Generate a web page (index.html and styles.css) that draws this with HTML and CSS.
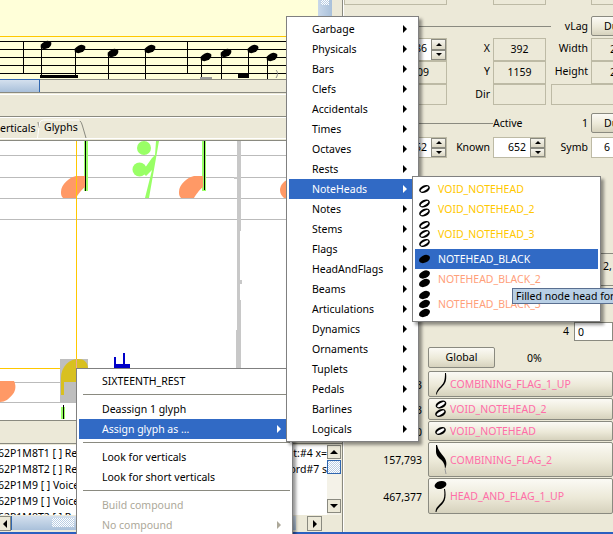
FILE: index.html
```html
<!DOCTYPE html>
<html>
<head>
<meta http-equiv="Content-Type" content="text/html; charset=utf-8"/>
<title>Glyph board</title>
<link rel="stylesheet" href="styles.css">
</head>

<body>

<svg class="sprite">
  <defs>
    <g id="black"><ellipse rx="5.7" ry="3.7" transform="rotate(-25)"/></g>
    <g id="void"><ellipse rx="5.6" ry="3.6" transform="rotate(-25)"/><ellipse rx="4.4" ry="1.5" transform="rotate(-32)" fill="#fff"/></g>
  </defs>
</svg>

<div class="app">

  <div class="left">
    <div class="score-row">
      <svg class="score" width="318" height="79">
        <rect x="0" y="36" width="318" height="1" fill="#ffc800"/>
        <g fill="#000">
          <rect x="0" y="41" width="318" height="1"/>
          <rect x="0" y="49" width="318" height="1"/>
          <rect x="0" y="57" width="318" height="1"/>
          <rect x="0" y="65" width="318" height="1"/>
          <rect x="0" y="73" width="318" height="1"/>
          <rect x="23" y="41" width="1" height="33"/>
          <rect x="187" y="41" width="1" height="33"/>
          <rect x="41" y="47" width="1" height="30"/>
          <rect x="75" y="51" width="1" height="26"/>
          <rect x="108" y="55" width="1" height="24"/>
          <rect x="145" y="51" width="1" height="28"/>
          <rect x="201" y="59" width="1" height="18"/>
          <rect x="221" y="55" width="1" height="24"/>
          <rect x="248" y="51" width="1" height="24"/>
          <rect x="267" y="59" width="1" height="20"/>
          <rect x="40" y="75" width="38" height="3"/>
          <rect x="238" y="74" width="11" height="4"/>
          <use href="#black" x="46" y="45"/>
          <use href="#black" x="80" y="49"/>
          <use href="#black" x="113" y="53"/>
          <use href="#black" x="150" y="49"/>
          <use href="#black" x="206" y="57"/>
          <use href="#black" x="226" y="53"/>
          <use href="#black" x="253" y="49"/>
          <use href="#black" x="272" y="57"/>
        </g>
        <rect x="200" y="77" width="12" height="2" fill="#999"/>
        <path d="M276 70 C278 72 278 75 276 78" fill="none" stroke="#888"/>
      </svg>
      <div class="vscroll"><div class="vthumb"><div class="thumb-grip"></div></div></div>
    </div>

    <div class="hscroll"><div class="hthumb"></div></div>
    <div class="strip"></div>

    <div class="tabs">
      <span class="tab tab-cut">erticals</span>
      <span class="tab tab-on">
        Glyphs
        <svg class="tab-edge" width="50" height="21">
          <path d="M1 4 L2 10" stroke="#8a8a80" fill="none"/>
          <path d="M0.500 20 L2.500 5 Q3.500 2 6.500 2 L42 2" stroke="#fff" fill="none"/>
          <path d="M43 3 Q44.500 4 45.500 8 L49 20" stroke="#8a8a80" fill="none"/>
        </svg>
      </span>
    </div>

    <svg class="glyphs" width="342" height="279" viewBox="0 141 342 279">
      <!-- staff lines -->
      <g fill="#bbb">
        <rect x="0" y="155" width="342" height="1"/>
        <rect x="0" y="177" width="342" height="1"/>
        <rect x="0" y="198" width="342" height="1"/>
        <rect x="0" y="219" width="342" height="1"/>
        <rect x="0" y="382" width="342" height="1"/>
        <rect x="0" y="402" width="342" height="1"/>
      </g>
      <!-- bar line -->
      <g fill="#c8c8c8">
        <rect x="237" y="141" width="3" height="279"/>
        <rect x="240" y="141" width="1" height="90"/>
        <rect x="234" y="177" width="7" height="2"/>
        <rect x="240" y="280" width="2" height="4"/>
        <rect x="240" y="300" width="1" height="80"/>
        <rect x="236" y="330" width="1" height="60"/>
      </g>
      <!-- rest -->
      <g fill="#99ff66">
        <circle cx="144" cy="148" r="7"/>
        <circle cx="139.500" cy="169.500" r="7"/>
        <path d="M156 141 L159 141 L149 198 L145 198 L152 170 L146 176 L142 172 L152 158 L155 155Z"/>
        <rect x="84" y="141" width="4" height="50"/>
        <rect x="202" y="141" width="4" height="50"/>
      </g>
      <!-- note heads -->
      <g fill="#ff9966">
        <path d="M61 192 C61 184 70 177 76 176 L85 176 L85 187 C80 191 78 195 76 198 L63 198 C61 196 61 194 61 192Z"/>
        <path d="M179 192 C179 184 188 177 194 176 L203 176 L203 187 C198 191 196 195 194 198 L181 198 C179 196 179 194 179 192Z"/>
        <path d="M287 180 C283 182 280 186 280 190 C280 194 282 196 284 198 L287 198Z"/>
        <path d="M0 381 L14 381 C16 385 16 390 13 394 C9 399 5 402 0 402Z"/>
      </g>
      <rect x="76" y="141" width="1" height="227" fill="#ffc800"/>
      <rect x="0" y="368" width="77" height="1" fill="#ffc800"/>
      <rect x="85" y="141" width="1" height="50"/>
      <rect x="204" y="141" width="1" height="49"/>
      <!-- selected glyph -->
      <rect x="60" y="359" width="28" height="43" fill="#bebebe"/>
      <path d="M61 395 L61 378 C61 366 70 359 78 359 C84 359 88 362 88 369 L77 369 L77 382 L64 382 L64 395Z" fill="#d8c020"/>
      <rect x="76" y="359" width="1" height="9" fill="#e8a8a0"/>
      <rect x="61" y="407" width="4" height="12" fill="#99ff66"/>
      <rect x="63" y="405" width="1" height="14"/>
      <path d="M114 357 h2 v7 h7 v-11 h2 v11 h5 v4 h-16Z" fill="#0000c8"/>
    </svg>

    <div class="strip strip-low"></div>

    <div class="log-row">
      <ul class="log">
        <li><span>62P1M8T1 [ ] Read</span><span>t:#4 x=</span></li>
        <li><span>62P1M8T2 [ ] Read</span><span>ord#7 s</span></li>
        <li><span>62P1M9 [ ] Voice</span></li>
        <li><span>62P1M9 [ ] Voice</span></li>
        <li><span>62P1M8T2 [ ] R</span></li>
      </ul>
      <div class="log-scroll">
        <div class="sbtn"><i class="up"></i></div>
        <div class="vgrip"></div>
        <div class="sbtn"><i class="down"></i></div>
      </div>
    </div>

    <div class="log-hbar">
      <div class="sbtn sbtn-l"><i class="lft"></i></div>
      <div class="hgrip"><div class="hgrip-dots"></div></div>
      <div class="sbtn sbtn-r"><i class="rgt"></i></div>
    </div>
  </div>

  <div class="panel">
    <div class="fields fields-top">
      <div class="field"></div><span></span><div class="field"></div><span></span><div class="field"></div>
    </div>

    <div class="rule-row">
      <div class="rule rule-a"></div>
      <label class="grow">vLag</label>
      <div class="btn btn-dump">Du</div>
    </div>

    <div class="fields">
      <div class="spin-box"><div class="input">86</div><div class="spin"><b><i class="up"></i></b><b><i class="down"></i></b></div></div>
      <label>X</label><div class="field">392</div>
      <label>Width</label><div class="field field-cut">2</div>
    </div>
    <div class="fields">
      <div class="field field-r">09</div>
      <label>Y</label><div class="field">1159</div>
      <label>Height</label><div class="field field-cut">2</div>
    </div>
    <div class="fields fields-dir">
      <div class="field"></div>
      <label>Dir</label><div class="field"></div>
      <div class="field field-wide"></div>
    </div>

    <div class="rule-row rule-row-active">
      <div class="rule rule-b"></div>
      <span>Active</span>
      <label class="grow">1</label>
      <div class="btn btn-dump">Du</div>
    </div>

    <div class="fields">
      <div class="spin-box"><div class="input">652</div><div class="spin"><b><i class="up"></i></b><b><i class="down"></i></b></div></div>
      <label>Known</label>
      <div class="spin-box"><div class="input">652</div><div class="spin"><b><i class="up"></i></b><b><i class="down"></i></b></div></div>
      <label>Symb</label><div class="input input-symb">6</div>
    </div>

    <div class="tail">
      <div class="tail-cell">2,</div>
      <div class="tail-cell"></div>
    </div>

    <div class="seed-row">
      <label>4</label>
      <div class="input input-seed">0</div>
    </div>

    <div class="global-row">
      <div class="btn btn-global">Global</div>
      <span>0%</span>
    </div>

    <div class="votes">
      <span>3</span>
      <div class="btn vote vote-1">
        <svg width="14" height="24" viewBox="0 0 14 24"><path d="M2 23 C2 19 4 17 7 14 C10 11 11 8 11 1 L12 1 C13 9 11 12 8 15 C5 18 3 20 3 22Z"/></svg>
        COMBINING_FLAG_1_UP
      </div>
      <span>3</span>
      <div class="btn vote vote-2">
        <svg width="14" height="20" viewBox="0 0 14 20"><use href="#void" x="7" y="5.500"/><use href="#void" x="6.500" y="14"/></svg>
        VOID_NOTEHEAD_2
      </div>
      <span>0</span>
      <div class="btn vote vote-3">
        <svg width="14" height="12" viewBox="0 0 14 12"><use href="#void" x="6.500" y="6"/></svg>
        VOID_NOTEHEAD
      </div>
      <span>157,793</span>
      <div class="btn vote vote-4">
        <svg width="14" height="32" viewBox="0 0 14 32"><path d="M2 1 L3 1 C4 6 7 9 10 13 C13 17 13 21 11 25 C11 20 9 17 6 15 C4 13 2 11 2 8Z"/><path d="M11 25 L12 30" stroke="#999" fill="none"/></svg>
        COMBINING_FLAG_2
      </div>
      <span>467,377</span>
      <div class="btn vote vote-5">
        <svg width="14" height="33" viewBox="0 0 14 33"><ellipse cx="6.500" cy="5" rx="6" ry="3.800" transform="rotate(-15 6.500 5)"/><path d="M1.500 32 C1.500 28 4 26 7 23 C10 20 11 16 10 9 L11 9 C12.500 17 11 21 8 24.500 C5 27.500 3 29 2.500 32Z"/></svg>
        HEAD_AND_FLAG_1_UP
      </div>
    </div>
  </div>
</div>
<div class="app-edge"></div>

<!-- popup menus -->
<div class="menu menu-context">
  <div class="item">SIXTEENTH_REST</div>
  <div class="sep"></div>
  <div class="item">Deassign 1 glyph</div>
  <div class="item on">Assign glyph as &hellip;<i class="arrow"></i></div>
  <div class="sep"></div>
  <div class="item">Look for verticals</div>
  <div class="item">Look for short verticals</div>
  <div class="sep"></div>
  <div class="item off">Build compound</div>
  <div class="item off">No compound<i class="arrow"></i></div>
</div>

<div class="menu menu-main">
  <div class="item">Garbage<i class="arrow"></i></div>
  <div class="item">Physicals<i class="arrow"></i></div>
  <div class="item">Bars<i class="arrow"></i></div>
  <div class="item">Clefs<i class="arrow"></i></div>
  <div class="item">Accidentals<i class="arrow"></i></div>
  <div class="item">Times<i class="arrow"></i></div>
  <div class="item">Octaves<i class="arrow"></i></div>
  <div class="item">Rests<i class="arrow"></i></div>
  <div class="item on">NoteHeads<i class="arrow"></i></div>
  <div class="item">Notes<i class="arrow"></i></div>
  <div class="item">Stems<i class="arrow"></i></div>
  <div class="item">Flags<i class="arrow"></i></div>
  <div class="item">HeadAndFlags<i class="arrow"></i></div>
  <div class="item">Beams<i class="arrow"></i></div>
  <div class="item">Articulations<i class="arrow"></i></div>
  <div class="item">Dynamics<i class="arrow"></i></div>
  <div class="item">Ornaments<i class="arrow"></i></div>
  <div class="item">Tuplets<i class="arrow"></i></div>
  <div class="item">Pedals<i class="arrow"></i></div>
  <div class="item">Barlines<i class="arrow"></i></div>
  <div class="item">Logicals<i class="arrow"></i></div>
</div>

<div class="menu menu-sub">
  <div class="shape yellow"><svg width="12" height="20"><use href="#void" x="5.500" y="10"/></svg>VOID_NOTEHEAD</div>
  <div class="shape yellow"><svg width="12" height="20"><use href="#void" x="5.500" y="4.500"/><use href="#void" x="5.500" y="13.500"/></svg>VOID_NOTEHEAD_2</div>
  <div class="shape shape-3 yellow"><svg width="12" height="30"><use href="#void" x="5.500" y="6"/><use href="#void" x="5.500" y="15"/><use href="#void" x="5.500" y="24"/></svg>VOID_NOTEHEAD_3</div>
  <div class="shape on"><svg width="12" height="20"><use href="#black" x="5.500" y="10"/></svg>NOTEHEAD_BLACK</div>
  <div class="shape salmon"><svg width="12" height="20"><use href="#black" x="5.500" y="5.500"/><use href="#black" x="5.500" y="14"/></svg>NOTEHEAD_BLACK_2</div>
  <div class="shape shape-3 salmon"><svg width="12" height="30"><use href="#black" x="5.500" y="6"/><use href="#black" x="5.500" y="15"/><use href="#black" x="5.500" y="24"/></svg>NOTEHEAD_BLACK_3</div>
</div>

<div class="tip">Filled node head for</div>

</body>
</html>
```

FILE: styles.css
```css
html, body {
  margin: 0;
  height: 534px;
  overflow: hidden;
}

body {
  position: relative;
  background-color: #ece9d8;
  font-family: "Noto Sans", sans-serif;
  font-size: 10.5px;
  color: #000;
}

.sprite {
  display: block;
  width: 0;
  height: 0;
}

.app {
  display: flex;
  height: 532px;
  overflow: hidden;
}

.app-edge {
  height: 2px;
  background-color: #2a5fc0;
}

/* left side */
.left {
  width: 342px;
  flex: none;
  border-right: 1px solid #8a8a80;
  box-shadow: 1px 0 0 #fff;
}

.score-row {
  display: flex;
  height: 79px;
}

.score {
  display: block;
  background-color: #ffffd9;
  flex: none;
}

.vscroll {
  width: 14px;
  flex: none;
}

.vthumb {
  height: 79px;
  background: linear-gradient(90deg, #c9d8ea, #a9c0da);
}

.thumb-grip {
  width: 8px;
  height: 5px;
  margin: 0 auto;
  background: repeating-conic-gradient(#fff 0 25%, #b9cde4 0 50%) 0 0 / 2px 2px;
}

.hscroll {
  height: 14px;
  box-sizing: border-box;
  border-top: 1px solid #8a8a80;
  border-bottom: 1px solid #8a8a80;
}

.hthumb {
  width: 39px;
  height: 12px;
  border-right: 1px solid #2f66b0;
  border-top: 1px solid #2f66b0;
  margin-top: -1px;
  background: linear-gradient(#d4e0ee, #a9c0da);
}

.strip {
  height: 21px;
  margin-top: 1px;
  border-top: 1px solid #fff;
  border-bottom: 1px solid #8a8a80;
}

.tabs {
  display: flex;
  height: 22px;
  border-top: 1px solid #fff;
  border-bottom: 1px solid #fff;
  box-shadow: 0 1px 0 #ece9d8, 0 2px 0 #8a8a80;
  margin-bottom: 2px;
  line-height: 20px;
  box-sizing: border-box;
}

.tab {
  display: block;
  height: 20px;
  box-sizing: border-box;
}

.tab-cut {
  width: 38px;
  flex: none;
  overflow: hidden;
}

.tab-on {
  position: relative;
  width: 47px;
  padding: 1px 0 0 6px;
  line-height: 17px;
}

.tab-edge {
  position: absolute;
  left: -1px;
  top: 0;
}

.glyphs {
  display: block;
  background-color: #fff;
}

.strip-low {
  margin-top: 0;
  height: 22px;
  border-top: 1px solid #8a8a80;
  border-bottom: 1px solid #8a8a80;
}

.log-row {
  display: flex;
  height: 70px;
  margin-top: 1px;
}

.log {
  width: 327px;
  height: 70px;
  flex: none;
  margin: 0;
  padding: 0;
  list-style: none;
  background-color: #fff;
  overflow: hidden;
  box-sizing: border-box;
}

.log li {
  display: flex;
  justify-content: space-between;
  height: 16px;
  line-height: 16px;
  margin-left: -2px;
  white-space: nowrap;
}

.log-scroll {
  width: 14px;
  flex: none;
  background-color: #f4f2e8;
  display: flex;
  flex-direction: column;
}

.sbtn {
  display: flex;
  align-items: center;
  justify-content: center;
  width: 14px;
  height: 14px;
  border: 1px solid #8a8a80;
  box-sizing: border-box;
  background-color: #ece9d8;
}

.vgrip {
  flex: none;
  height: 14px;
  margin-top: 1px;
  margin-bottom: 25px;
  box-sizing: border-box;
  border: 1px solid #2f66b0;
  background: repeating-conic-gradient(#fff 0 25%, #b9cde4 0 50%) 0 0 / 2px 2px;
}

.log-hbar {
  display: flex;
  height: 15px;
  margin-top: 1px;
  background-color: #ece9d8;
}

.sbtn-l {
  width: 11px;
  height: 15px;
  border-left: 0;
}

.sbtn-r {
  width: 15px;
  height: 15px;
  margin-left: 11px;
}

.hgrip {
  width: 285px;
  height: 14px;
  box-sizing: border-box;
  padding: 2px 0 0 40px;
  border-left: 1px solid #2f66b0;
  background: linear-gradient(#d4e0ee, #a9c0da);
}

.hgrip-dots {
  width: 22px;
  height: 9px;
  background: repeating-conic-gradient(#fff 0 25%, #b9cde4 0 50%) 0 0 / 2px 2px;
}

.up, .down, .lft, .rgt, .arrow {
  display: block;
  width: 0;
  height: 0;
}

.up {
  border: 4px solid transparent;
  border-top: 0;
  border-bottom: 4px solid #000;
}

.down {
  border: 4px solid transparent;
  border-bottom: 0;
  border-top: 4px solid #000;
}

.lft {
  border: 4px solid transparent;
  border-left: 0;
  border-right: 4px solid #000;
}

.rgt {
  border: 4px solid transparent;
  border-right: 0;
  border-left: 4px solid #000;
}

/* right side */
.panel {
  width: 269px;
  margin-left: 1px;
  flex: none;
  overflow: hidden;
}

.fields {
  display: grid;
  grid-template-columns: 103px 46px 53px 45px 53px;
  height: 21px;
  margin-bottom: 2px;
  line-height: 21px;
}

.fields-top {
  height: 5px;
  margin-bottom: 11px;
  overflow: hidden;
}

.fields-top .field {
  height: 5px;
  border-top: 0;
  box-sizing: border-box;
}

.fields-dir {
  margin-bottom: 8px;
}

.fields label {
  text-align: right;
  padding-right: 3px;
}

.field {
  border: 1px solid #bdbaa5;
  box-sizing: border-box;
  text-align: center;
}

.field-r {
  text-align: right;
  padding-right: 17px;
}

.field-cut {
  text-align: left;
  padding-left: 18px;
}

.field-wide {
  grid-column: 4 / 6;
  margin-left: 5px;
}

.spin-box {
  display: flex;
  border: 1px solid #bdbaa5;
  box-sizing: border-box;
  background-color: #fff;
  line-height: 19px;
}

.input {
  flex: 1;
  text-align: right;
  padding-right: 4px;
  background-color: #fff;
}

.spin {
  width: 15px;
  flex: none;
  display: flex;
  flex-direction: column;
}

.spin b {
  flex: 1;
  display: flex;
  align-items: center;
  justify-content: center;
  background: linear-gradient(#f6f5ee, #dcd8c4);
  border: 1px solid #8a8a80;
}

.spin i {
  border-width: 3px;
}

.input-symb {
  border: 1px solid #bdbaa5;
  text-align: left;
  padding-left: 12px;
  line-height: 19px;
}

.rule-row {
  display: flex;
  align-items: center;
  height: 20px;
  margin-bottom: 2px;
  line-height: 18px;
}

.rule-row-active {
  margin-bottom: 4px;
}

.rule {
  height: 1px;
  background-color: #8a8a80;
  flex: none;
}

.rule-a {
  width: 207px;
}

.rule-b {
  width: 149px;
}

.grow {
  flex: 1;
  text-align: right;
  padding-right: 3px;
}

.btn {
  box-sizing: border-box;
  border: 1px solid #8a8a80;
  border-radius: 2px;
  background: linear-gradient(#fbfaf5, #ece9d8 55%, #d6d2bd);
}

.btn-dump {
  width: 60px;
  flex: none;
  height: 20px;
  margin-right: -38px;
  padding-left: 12px;
}

.tail {
  margin: 95px 0 5px 256px;
  height: 64px;
}

.tail-cell {
  height: 32px;
  box-sizing: border-box;
  border-top: 1px solid #8a8a80;
  padding: 5px 0 0 3px;
}

.seed-row {
  display: flex;
  height: 19px;
  margin-bottom: 6px;
  line-height: 19px;
}

.seed-row label {
  width: 225px;
  flex: none;
  text-align: right;
  margin-right: 5px;
}

.input-seed {
  border: 1px solid #8a8a80;
  text-align: left;
  padding-left: 3px;
}

.global-row {
  display: flex;
  align-items: center;
  height: 21px;
  margin-bottom: 3px;
  padding-left: 84px;
}

.btn-global {
  width: 67px;
  height: 21px;
  line-height: 19px;
  text-align: center;
  margin-right: 32px;
}

.votes {
  display: grid;
  grid-template-columns: 78px 185px;
  column-gap: 6px;
  align-items: center;
}

.votes > span {
  text-align: right;
}

.vote {
  display: flex;
  align-items: center;
  gap: 2px;
  padding-left: 5px;
  margin-bottom: 1px;
  color: #ff6ea8;
  white-space: nowrap;
}

.vote-1 { height: 26px; }
.vote-2 { height: 22px; }
.vote-3 { height: 20px; }
.vote-4 { height: 35px; }
.vote-5 { height: 36px; }

/* popups */
.menu {
  position: absolute;
  box-sizing: border-box;
  border: 1px solid #808080;
  padding: 2px;
  background-color: #fff;
  box-shadow: 3px 3px 3px rgba(0, 0, 0, 0.4);
  white-space: nowrap;
}

.menu-context {
  left: 76px;
  top: 368px;
  width: 217px;
  z-index: 1;
}

.menu-main {
  left: 286px;
  top: 16px;
  width: 133px;
  z-index: 2;
}

.menu-sub {
  left: 412px;
  top: 176px;
  width: 189px;
  z-index: 3;
}

.item {
  display: flex;
  align-items: center;
  justify-content: space-between;
  box-sizing: border-box;
  height: 20px;
  padding: 0 9px 1px 23px;
}

.arrow {
  border: 4px solid transparent;
  border-right: 0;
  border-left: 4px solid #000;
  margin-top: 1px;
}

.item.on, .shape.on {
  background-color: #316ac5;
  color: #fff;
}

.item.on .arrow {
  border-left-color: #fff;
}

.item.off {
  color: #aca899;
}

.item.off .arrow {
  border-left-color: #aca899;
}

.sep {
  height: 8px;
  box-sizing: border-box;
  margin-left: 4px;
  border-top: 3px solid #fff;
  border-bottom: 4px solid #fff;
  background-color: #8a8a80;
}

.shape {
  display: flex;
  align-items: center;
  gap: 7px;
  box-sizing: border-box;
  height: 20px;
  padding-left: 4px;
  line-height: 18px;
}

.shape-3 {
  height: 30px;
}

.shape svg {
  flex: none;
}

.yellow {
  color: #ffc800;
}

.salmon {
  color: #ffa07a;
}

.tip {
  position: absolute;
  left: 512px;
  top: 288px;
  width: 102px;
  z-index: 4;
  height: 16px;
  padding: 0 0 0 3px;
  line-height: 15px;
  box-sizing: border-box;
  border: 1px solid #5a6f90;
  border-right: 0;
  background-color: #b8cfe5;
  white-space: nowrap;
  overflow: hidden;
}
```
